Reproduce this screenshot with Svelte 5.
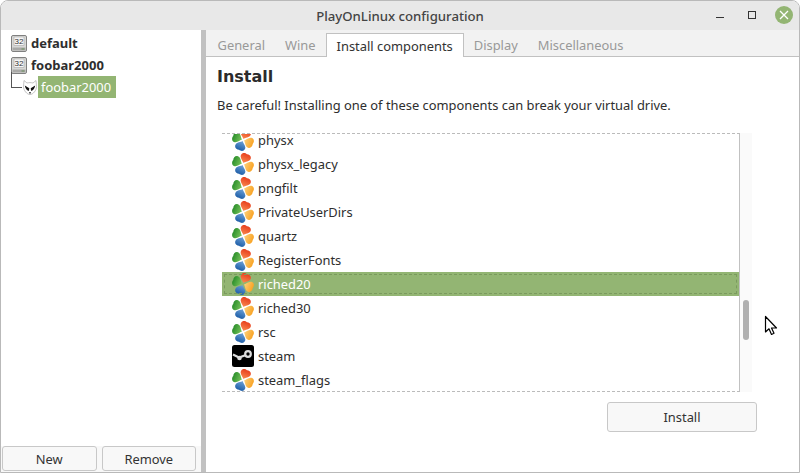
<script>
    const tabs = ['General', 'Wine', 'Install components', 'Display', 'Miscellaneous'];
    const rows = ['physx', 'physx_legacy', 'pngfilt', 'PrivateUserDirs', 'quartz', 'RegisterFonts', 'riched20', 'riched30', 'rsc', 'steam', 'steam_flags'];
    const petal = 'M0 -1 C-.8 -2.600 -5.300 -4.200 -5 -7.300 C-4.800 -10 -1.800 -10.800 0 -10 C1.800 -10.800 4.800 -10 5 -7.300 C5.300 -4.200 .8 -2.600 0 -1Z';
</script>

{#snippet clover()}
    <svg class="icon" width="22" height="22" viewBox="-10.500 -10.500 21 21">
        <path d={petal} transform="rotate(22)" fill="url(#red)" />
        <path d={petal} transform="rotate(112)" fill="url(#orange)" />
        <path d={petal} transform="rotate(202)" fill="url(#blue)" />
        <path d={petal} transform="rotate(292)" fill="url(#green)" />
    </svg>
{/snippet}

{#snippet disk()}
    <svg class="disk" width="16" height="17" viewBox="0 0 16 17">
        <rect x=".5" y=".5" width="15" height="16" rx="1.500" fill="#d8d8d6" stroke="#808080" />
        <rect x="3" y="2" width="10" height="8.500" fill="#f6f6f6" stroke="#9a9a9a" stroke-width=".5" />
        <text x="8" y="9.300" text-anchor="middle" class="disk-num">32</text>
        <rect x="1.500" y="12.500" width="13" height="3" fill="#a9a9a7" />
        <rect x="10.500" y="13.500" width="3" height="1" fill="#6b8f5c" />
    </svg>
{/snippet}

<div class="window">
    <svg class="defs" width="0" height="0">
        <defs>
            <linearGradient id="red" x1="0" y1="0" x2="0" y2="1"><stop offset="0" stop-color="#e8401f" /><stop offset="1" stop-color="#f98a4f" /></linearGradient>
            <linearGradient id="orange" x1="0" y1="0" x2="0" y2="1"><stop offset="0" stop-color="#f9a324" /><stop offset="1" stop-color="#fdd07a" /></linearGradient>
            <linearGradient id="blue" x1="0" y1="0" x2="0" y2="1"><stop offset="0" stop-color="#1f5fa8" /><stop offset="1" stop-color="#6fa2d8" /></linearGradient>
            <linearGradient id="green" x1="0" y1="0" x2="0" y2="1"><stop offset="0" stop-color="#2c8f2c" /><stop offset="1" stop-color="#7cc65c" /></linearGradient>
        </defs>
    </svg>

    <header class="titlebar">
        <span class="title">PlayOnLinux configuration</span>
        <div class="controls">
            <span class="min"></span>
            <span class="max"></span>
            <span class="close">
                <svg width="18" height="18" viewBox="0 0 18 18"><path d="M5 5 L13 13 M13 5 L5 13" stroke="#fff" stroke-width="1.300" /></svg>
            </span>
        </div>
    </header>

    <div class="body">
        <aside class="side">
            <div class="tree">
                <div class="node">{@render disk()}<b>default</b></div>
                <div class="node">{@render disk()}<b>foobar2000</b></div>
                <div class="child">
                    <span class="elbow"></span>
                    <svg class="alien" width="14" height="15" viewBox="0 0 14 15">
                        <path d="M1 .5 L4 3 C6 2.500 8 2.500 10 3 L13 .5 L13.500 6.500 C13.500 10.500 10 14.500 7 14.500 C4 14.500 .5 10.500 .5 6.500Z" fill="#fff" stroke="#aaa" stroke-width=".7" />
                        <path d="M1.800 5.500 L6.300 8.300 L5.800 11 C3.500 10.500 2.200 8 1.800 5.500Z M12.200 5.500 L7.700 8.300 L8.200 11 C10.500 10.500 11.800 8 12.200 5.500Z M5.800 12.300 L8.200 12.300 L7 14Z" fill="#111" />
                    </svg>
                    <span class="picked">foobar2000</span>
                </div>
            </div>
            <div class="side-btns">
                <button>New</button>
                <button>Remove</button>
            </div>
        </aside>

        <div class="sash"></div>

        <main class="main">
            <nav class="tabs">
                {#each tabs as tab, i}
                    <span class="tab" class:on={i === 2}>{tab}</span>
                {/each}
            </nav>
            <section class="page">
                <h1>Install</h1>
                <p>Be careful! Installing one of these components can break your virtual drive.</p>
                <div class="listwrap">
                    <div class="list">
                        <div class="rows">
                            {#each rows as row}
                                <div class="row" class:sel={row === 'riched20'}>
                                    {#if row === 'steam'}
                                        <svg class="icon" width="22" height="22" viewBox="0 0 22 22">
                                            <rect width="22" height="22" rx="2.500" fill="#000" />
                                            <path d="M1 9.500 L7 12.500 L14 10" fill="none" stroke="#ddd" stroke-width="2.200" />
                                            <circle cx="16" cy="9" r="2.800" fill="none" stroke="#ddd" stroke-width="2.200" />
                                            <circle cx="7.500" cy="13" r="2.300" fill="#ddd" />
                                        </svg>
                                    {:else}
                                        {@render clover()}
                                    {/if}
                                    <span>{row}</span>
                                </div>
                            {/each}
                        </div>
                    </div>
                    <div class="track"><div class="thumb"></div></div>
                </div>
                <div class="foot"><button class="install">Install</button></div>
            </section>
        </main>
    </div>

    <svg class="cursor" width="16" height="22" viewBox="0 0 16 22">
        <path d="M1.500 1.500 L1.500 17 L5 13.800 L7.500 19.500 L10 18.300 L7.500 13 L12.500 13Z" fill="#fff" stroke="#000" stroke-width="1.200" stroke-linejoin="round" />
    </svg>
</div>

<style>
    :global(body) {
        background: #fff;
        font-family: "Noto Sans", "Open Sans", sans-serif;
    }

    .window {
        position: relative;
        width: 800px;
        height: 473px;
        box-sizing: border-box;
        display: flex;
        flex-direction: column;
        overflow: hidden;
        background: #fff;
        border: 1px solid #b9b9b9;
        border-radius: 8px 8px 0 0;
        color: #2e2e2e;
        font-size: 12.900px;
    }

    .defs {
        position: absolute;
    }

    .titlebar {
        height: 29px;
        flex: none;
        background: #e8e8e8;
        display: flex;
        align-items: center;
        justify-content: center;
        position: relative;
    }

    .title {
        font-size: 13.200px;
        font-weight: 500;
        color: #444;
    }

    .controls {
        position: absolute;
        right: 6px;
        top: 5px;
        display: flex;
        align-items: center;
        gap: 19px;
    }

    .min {
        width: 8px;
        height: 0;
        margin-top: 5px;
        margin-right: 5px;
        border-top: 1px solid #333;
    }

    .max {
        width: 6px;
        height: 6px;
        border: 1px solid #333;
    }

    .close {
        width: 18px;
        height: 18px;
        border-radius: 50%;
        background: #93b573;
        display: block;
    }

    .body {
        flex: 1;
        display: flex;
        min-height: 0;
    }

    .side {
        width: 200px;
        flex: none;
        display: flex;
        flex-direction: column;
        justify-content: space-between;
    }

    .tree {
        padding: 2px 0 0 10px;
    }

    .node {
        height: 22px;
        display: flex;
        align-items: center;
        gap: 4px;
        font-size: 13px;
    }

    .disk-num {
        font: 8px "Liberation Sans", sans-serif;
        fill: #333;
    }

    .child {
        height: 22px;
        display: flex;
        align-items: center;
        position: relative;
        padding-left: 12px;
    }

    .elbow {
        position: absolute;
        left: 0;
        top: -4px;
        width: 10px;
        height: 15px;
        border-left: 1px solid #555;
        border-bottom: 1px solid #555;
    }

    .alien {
        margin-right: 1px;
    }

    .picked {
        background: #93b573;
        color: #fff;
        padding: 0 5px 0 3px;
        height: 22px;
        line-height: 22px;
    }

    .side-btns {
        display: flex;
        gap: 5px;
        padding: 0 5px 1px 1px;
        background: #f8f8f8;
    }

    button {
        flex: 1;
        height: 25px;
        font: inherit;
        color: #333;
        background: #f8f8f8;
        border: 1px solid #c8c8c8;
        border-radius: 3px;
        padding: 0;
    }

    .sash {
        width: 5px;
        flex: none;
        background: #c1c1c1;
    }

    .main {
        flex: 1;
        display: flex;
        flex-direction: column;
        min-width: 0;
    }

    .tabs {
        height: 27px;
        flex: none;
        display: flex;
        align-items: flex-end;
        padding-left: 1.500px;
        background: #f2f2f2;
        border-bottom: 1px solid #c1c1c1;
        box-sizing: border-box;
    }

    .tab {
        height: 24px;
        line-height: 27px;
        padding: 0 10px;
        color: #999;
    }

    .tab.on {
        height: 23px;
        line-height: 24px;
        background: #fff;
        color: #333;
        border: 1px solid #c1c1c1;
        border-bottom: none;
        margin-bottom: -1px;
    }

    .page {
        flex: 1;
        display: flex;
        flex-direction: column;
        padding: 0 0 0 11px;
        min-height: 0;
    }

    h1 {
        margin: 8px 0 0;
        font: bold 16px "DejaVu Sans", sans-serif;
        color: #2b2b2b;
        line-height: 24px;
    }

    p {
        margin: 6px 0 0;
        line-height: 20px;
    }

    .listwrap {
        display: flex;
        margin: 18px 0 0 5px;
        width: 530px;
        height: 259px;
    }

    .list {
        flex: 1;
        overflow: hidden;
        border-top: 1px dashed #bbb;
        border-bottom: 1px dashed #bbb;
        border-right: 1px solid #c1c1c1;
    }

    .rows {
        margin-top: -6px;
    }

    .row {
        height: 24px;
        line-height: 13px;
        display: flex;
        align-items: center;
        gap: 4px;
        padding-left: 10px;
        box-sizing: border-box;
    }

    .row.sel {
        background: #93b573;
        color: #fff;
        outline: 1px dashed #7a9a5e;
        outline-offset: -3px;
    }

    .track {
        width: 12px;
        flex: none;
        background: #fafafa;
        position: relative;
    }

    .thumb {
        position: absolute;
        left: 3px;
        top: 167px;
        width: 6px;
        height: 40px;
        border-radius: 3px;
        background: #b0b0b0;
    }

    .foot {
        display: flex;
        justify-content: flex-end;
        padding: 10px 42px 0 0;
    }

    .install {
        flex: none;
        width: 150px;
        height: 30px;
    }

    .cursor {
        position: absolute;
        left: 763px;
        top: 314px;
    }
</style>
